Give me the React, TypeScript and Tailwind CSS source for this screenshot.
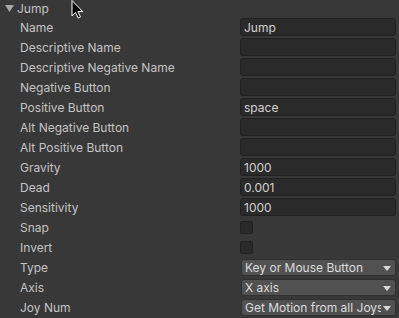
import * as React from "react";

type Field =
  | { label: string; kind: "text"; value?: string }
  | { label: string; kind: "check" }
  | { label: string; kind: "select"; value: string };

const fields: Field[] = [
  { label: "Name", kind: "text", value: "Jump" },
  { label: "Descriptive Name", kind: "text" },
  { label: "Descriptive Negative Name", kind: "text" },
  { label: "Negative Button", kind: "text" },
  { label: "Positive Button", kind: "text", value: "space" },
  { label: "Alt Negative Button", kind: "text" },
  { label: "Alt Positive Button", kind: "text" },
  { label: "Gravity", kind: "text", value: "1000" },
  { label: "Dead", kind: "text", value: "0.001" },
  { label: "Sensitivity", kind: "text", value: "1000" },
  { label: "Snap", kind: "check" },
  { label: "Invert", kind: "check" },
  { label: "Type", kind: "select", value: "Key or Mouse Button" },
  { label: "Axis", kind: "select", value: "X axis" },
  { label: "Joy Num", kind: "select", value: "Get Motion from all Joys" },
];

function Control({ f }: { f: Field }) {
  if (f.kind === "text") {
    return (
      <div className="flex h-[18px] w-[156px] items-center rounded-[3px] border border-[#212121] bg-[#2a2a2a] pl-[3px] pt-px text-[#d2d2d2]">
        {f.value}
      </div>
    );
  }
  if (f.kind === "check") {
    return <div className="h-[13px] w-[13px] rounded-[2px] border border-[#212121] bg-[#2a2a2a]" />;
  }
  return (
    <div className="relative ml-px flex h-[17px] w-[155px] items-center overflow-hidden rounded-[3px] border border-[#303030] bg-[#515151] pl-[3px] pr-[14px] pt-px text-[#dcdcdc]">
      <span className="overflow-hidden whitespace-nowrap">{f.value}</span>
      <svg className="absolute right-[4px] top-[6px]" width="8" height="5" viewBox="0 0 8 5">
        <path d="M0 0 H8 L4 5 Z" fill="#d8d8d8" />
      </svg>
    </div>
  );
}

export default function App() {
  return (
    <div
      className="relative h-[318px] w-[399px] overflow-hidden bg-[#383838] text-[12px] text-[#c4c4c4]"
      style={{ fontFamily: "Inter, 'Liberation Sans', sans-serif" }}
    >
      <div className="flex flex-col gap-[2px]">
        <div className="flex h-[16px] items-center pl-[5px] pt-px">
          <svg width="9" height="7" viewBox="0 0 9 7" className="mr-[3px]">
            <path d="M0 0 H9 L4.5 7 Z" fill="#a8a8a8" />
          </svg>
          <span>Jump</span>
        </div>
        {fields.map((f) => (
          <div key={f.label} className="flex h-[18px] items-center">
            <div className="w-[240px] pl-[20px] pt-px">{f.label}</div>
            <Control f={f} />
          </div>
        ))}
      </div>
      <svg className="absolute left-[71px] top-0" width="13" height="19" viewBox="0 0 13 19">
        <path d="M1 0.5 V16 L4.5 12.5 L7.2 18 L9.5 17 L6.9 11.6 H11.8 Z" fill="#000" stroke="#fff" strokeWidth="1" />
      </svg>
    </div>
  );
}
